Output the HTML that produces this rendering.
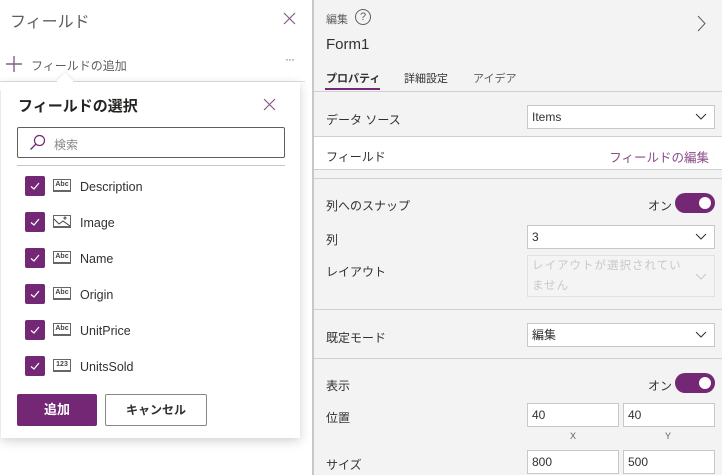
<!DOCTYPE html>
<html><head><meta charset="utf-8"><style>
*{box-sizing:border-box;margin:0;padding:0}
body{width:722px;height:475px;overflow:hidden;position:relative;background:#fff;font-family:"Liberation Sans","Noto Sans CJK JP",sans-serif;color:#323130}
.a{position:absolute;white-space:nowrap}
.right{position:absolute;left:312px;top:0;width:410px;height:475px;background:#f3f3f3;border-left:2px solid #c8c8c8}
.hl{position:absolute;left:0;width:410px;height:1px;background:#d0d0d0}
.lbl{position:absolute;left:12px;font-size:12px;color:#323130}
.box{position:absolute;background:#fff;border:1px solid #c8c8c8;font-size:12px;padding-left:4px;line-height:22px}
.chev{position:absolute;right:7px;top:7px}
.tog{position:absolute;left:361px;width:40px;height:20px;border-radius:10px;background:#742774}
.tog:after{content:"";position:absolute;right:4px;top:4px;width:12px;height:12px;border-radius:6px;background:#fff}
.cb{position:absolute;left:25px;width:20px;height:20px;background:#742774;border-radius:2px}
.ic{position:absolute;left:53px;width:18px;height:13px;border:1px solid #666;border-bottom-width:2px;font-size:7px;font-weight:bold;text-align:center;line-height:10px;color:#444}
.it{position:absolute;left:80px;font-size:12.5px;color:#323130}
</style></head><body>
<div class="a" style="left:10px;top:8px;font-size:16px;color:#605e5c">フィールド</div>
<svg class="a" style="left:283px;top:12px" width="13" height="13"><path d="M1 1L12 12M12 1L1 12" stroke="#8a5a8a" stroke-width="1.2"/></svg>
<svg class="a" style="left:6px;top:56px" width="16" height="16"><path d="M8 0V16M0 8H16" stroke="#8a5a8a" stroke-width="1.4"/></svg>
<div class="a" style="left:31px;top:57px;font-size:12px;color:#605e5c">フィールドの追加</div>
<div class="a" style="left:285px;top:52px;font-size:12px;color:#8a5a8a;letter-spacing:-1px">···</div>
<div class="a" style="left:0;top:81px;width:305px;height:1px;background:#e1dfdd"></div>
<div class="a" style="left:1px;top:82px;width:299px;height:356px;background:#fff;box-shadow:0 3px 10px rgba(0,0,0,.18)"></div>
<div class="a" style="left:59px;top:75px;width:12px;height:12px;background:#fff;transform:rotate(45deg);box-shadow:-1px -1px 2px rgba(0,0,0,.08)"></div>
<div class="a" style="left:0;top:82px;width:300px;height:8px;background:#fff"></div>
<div class="a" style="left:18px;top:95px;font-size:15px;font-weight:bold;color:#252423">フィールドの選択</div>
<svg class="a" style="left:263px;top:98px" width="13" height="13"><path d="M1 1L12 12M12 1L1 12" stroke="#8a5a8a" stroke-width="1.2"/></svg>
<div class="a" style="left:17px;top:127px;width:268px;height:31px;border:1px solid #605e5c;border-radius:2px"></div>
<svg class="a" style="left:29px;top:134px" width="17" height="17"><circle cx="10.5" cy="6.5" r="5" fill="none" stroke="#742774" stroke-width="1.2"/><path d="M7 10L1.5 15.5" stroke="#742774" stroke-width="1.3"/></svg>
<div class="a" style="left:54px;top:136px;font-size:12px;color:#8a8886">検索</div>
<div class="a" style="left:17px;top:165px;width:268px;height:1px;background:#c8c6c4"></div>
<div class="cb" style="top:176px"></div><div class="ic" style="top:179px">Abc</div><div class="it" style="top:180px">Description</div>
<div class="cb" style="top:212px"></div><div class="ic" style="top:215px"><svg width="16" height="10" style="display:block"><path d="M0 3L5 8L9 5L16 10M12 2A1 1 0 1 0 12 2.1" stroke="#444" fill="none"/></svg></div><div class="it" style="top:216px">Image</div>
<div class="cb" style="top:248px"></div><div class="ic" style="top:251px">Abc</div><div class="it" style="top:252px">Name</div>
<div class="cb" style="top:284px"></div><div class="ic" style="top:287px">Abc</div><div class="it" style="top:288px">Origin</div>
<div class="cb" style="top:320px"></div><div class="ic" style="top:323px">Abc</div><div class="it" style="top:324px">UnitPrice</div>
<div class="cb" style="top:356px"></div><div class="ic" style="top:359px">123</div><div class="it" style="top:360px">UnitsSold</div>
<svg class="a" style="left:25px;top:176px" width="20" height="200"><g stroke="#fff" stroke-width="1.2" fill="none"><path d="M6 10.5L9 13L14 7"/><path d="M6 46.5L9 49L14 43"/><path d="M6 82.5L9 85L14 79"/><path d="M6 118.5L9 121L14 115"/><path d="M6 154.5L9 157L14 151"/><path d="M6 190.5L9 193L14 187"/></g></svg>
<div class="a" style="left:17px;top:394px;width:80px;height:32px;background:#742774;border-radius:2px;color:#fff;font-size:13px;font-weight:bold;text-align:center;line-height:32px">追加</div>
<div class="a" style="left:105px;top:394px;width:102px;height:32px;border:1px solid #8a8886;border-radius:2px;font-size:12px;font-weight:bold;text-align:center;line-height:30px">キャンセル</div>

<div class="right">
<div class="lbl" style="top:11px;color:#605e5c;font-size:11px">編集</div>
<div class="a" style="left:41px;top:9px;width:16px;height:16px;border:1px solid #605e5c;border-radius:8px;font-size:11px;text-align:center;line-height:14px;color:#605e5c">?</div>
<svg class="a" style="left:383px;top:15px" width="10" height="17"><path d="M1 1L8 8.5L1 16" stroke="#605e5c" fill="none"/></svg>
<div class="lbl" style="top:36px;font-size:15px">Form1</div>
<div class="lbl" style="left:12px;top:70px;font-size:11px;font-weight:bold">プロパティ</div>
<div class="lbl" style="left:90px;top:70px;font-size:11px">詳細設定</div>
<div class="lbl" style="left:159px;top:70px;font-size:11px;color:#605e5c">アイデア</div>
<div class="a" style="left:11px;top:88px;width:55px;height:2px;background:#742774"></div>
<div class="hl" style="top:91px"></div>
<div class="lbl" style="top:111px">データ ソース</div>
<div class="box" style="left:213px;top:105px;width:188px;height:24px">Items<svg class="chev" width="12" height="8"><path d="M1 1L6 6L11 1" stroke="#323130" fill="none"/></svg></div>
<div class="hl" style="top:136px"></div>
<div class="a" style="left:0;top:137px;width:410px;height:32px;background:#fff"></div>
<div class="lbl" style="top:148px">フィールド</div>
<div class="a" style="right:13px;top:147px;font-size:12.5px;color:#8a4a8a">フィールドの編集</div>
<div class="hl" style="top:169px"></div>
<div class="hl" style="top:178px"></div>
<div class="lbl" style="top:197px">列へのスナップ</div>
<div class="a" style="left:334px;top:197px;font-size:12px">オン</div>
<div class="tog" style="top:193px"></div>
<div class="lbl" style="top:231px">列</div>
<div class="box" style="left:213px;top:225px;width:188px;height:24px">3<svg class="chev" width="12" height="8"><path d="M1 1L6 6L11 1" stroke="#323130" fill="none"/></svg></div>
<div class="lbl" style="top:263px">レイアウト</div>
<div class="box" style="left:213px;top:255px;width:188px;height:42px;background:#f4f4f4;border-color:#e1e1e1;color:#c8c8c8;font-size:11.5px;white-space:normal;padding:0 22px 0 4px;line-height:20px;letter-spacing:1px">レイアウトが選択されていません<svg class="chev" style="top:17px" width="12" height="8"><path d="M1 1L6 6L11 1" stroke="#c8c8c8" fill="none"/></svg></div>
<div class="hl" style="top:309px"></div>
<div class="lbl" style="top:329px">既定モード</div>
<div class="box" style="left:213px;top:323px;width:188px;height:24px">編集<svg class="chev" width="12" height="8"><path d="M1 1L6 6L11 1" stroke="#323130" fill="none"/></svg></div>
<div class="hl" style="top:358px"></div>
<div class="lbl" style="top:377px">表示</div>
<div class="a" style="left:334px;top:377px;font-size:12px">オン</div>
<div class="tog" style="top:373px"></div>
<div class="lbl" style="top:409px">位置</div>
<div class="box" style="left:213px;top:403px;width:92px;height:24px">40</div>
<div class="box" style="left:309px;top:403px;width:92px;height:24px">40</div>
<div class="a" style="left:256px;top:431px;font-size:9px;color:#605e5c">X</div>
<div class="a" style="left:351px;top:431px;font-size:9px;color:#605e5c">Y</div>
<div class="lbl" style="top:456px">サイズ</div>
<div class="box" style="left:213px;top:450px;width:92px;height:24px">800</div>
<div class="box" style="left:309px;top:450px;width:92px;height:24px">500</div>
</div>
</body></html>
